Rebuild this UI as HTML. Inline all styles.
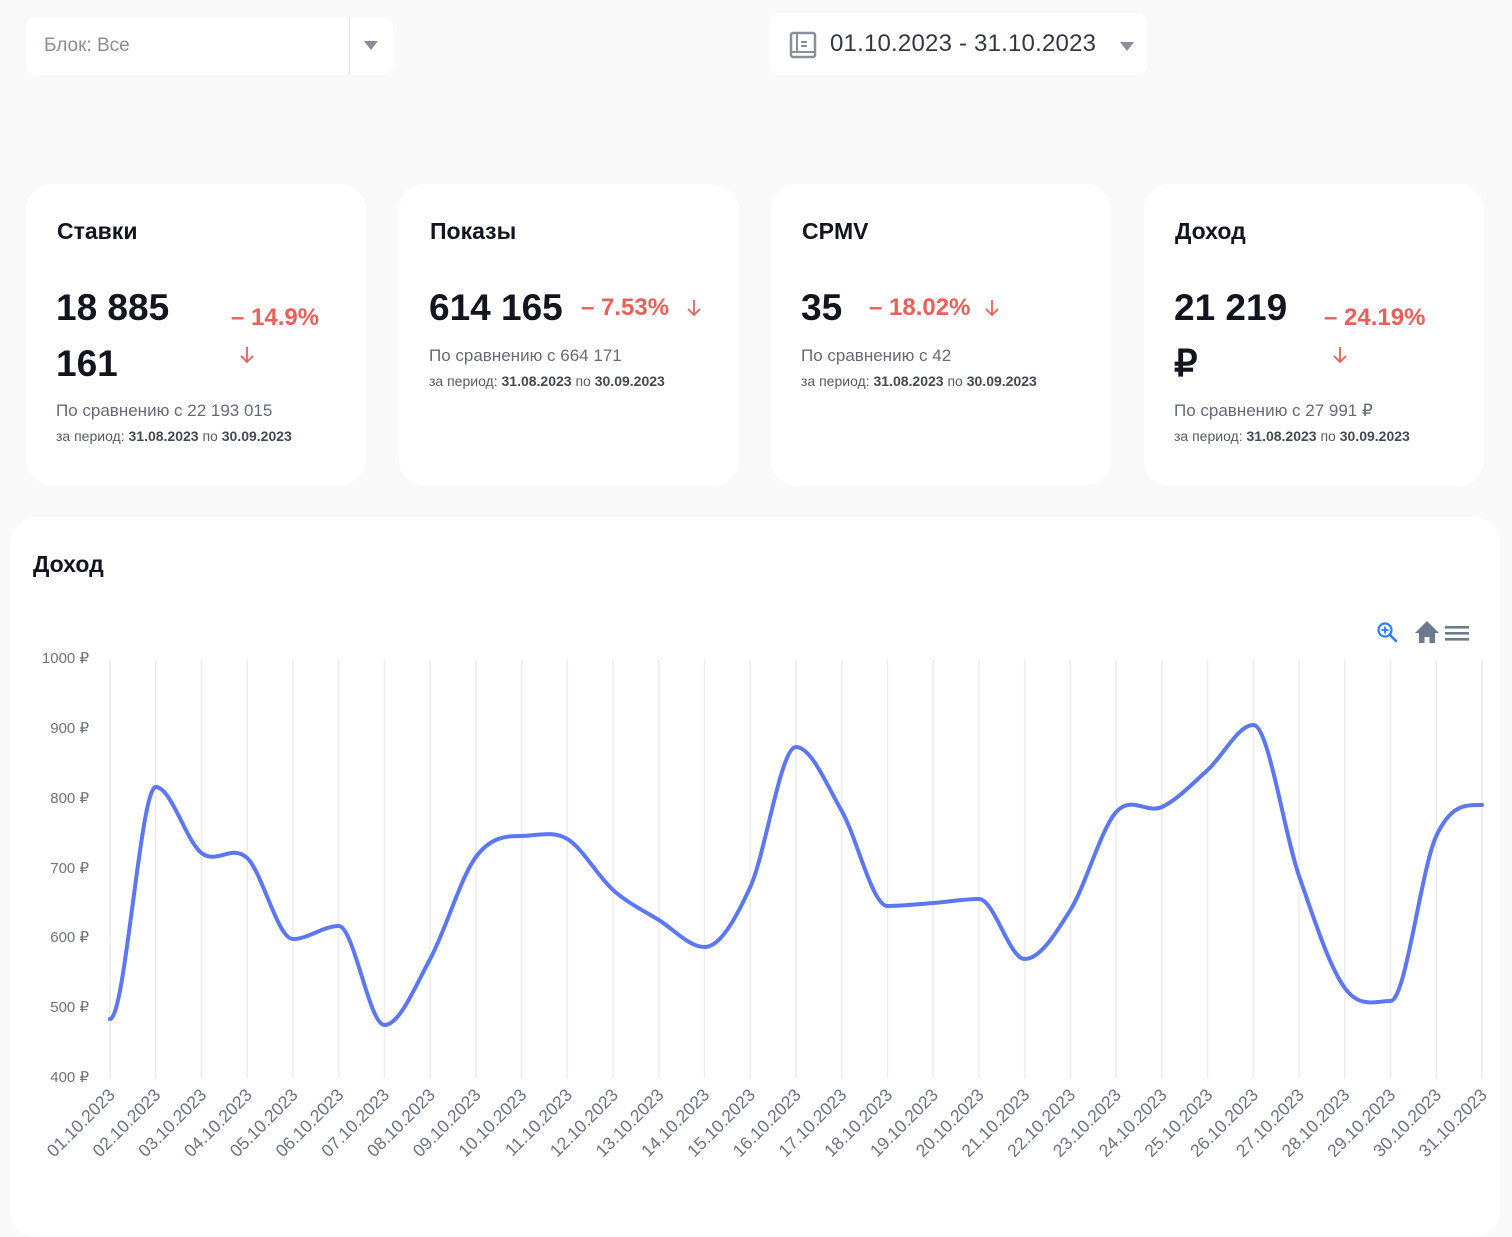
<!DOCTYPE html>
<html><head><meta charset="utf-8">
<style>
*{margin:0;padding:0;box-sizing:border-box}
body{width:1512px;height:1217px;background:#f9f9f9;font-family:"Liberation Sans",sans-serif;position:relative;overflow:hidden;color:#111}
.abs{position:absolute}
.box{background:#fff;border-radius:10px}
.card{position:absolute;top:184px;width:340px;height:302px;background:#fff;border-radius:26px}
.card h3{position:absolute;left:31px;top:34px;font-size:23px;font-weight:bold;color:#14141e}
.num{position:absolute;font-size:37px;font-weight:bold;color:#14141e;line-height:56px}
.pct{position:absolute;font-size:24px;font-weight:bold;color:#e8605a}
.arr{position:absolute;width:18px;height:20px}
.cmp{position:absolute;font-size:17px;color:#666a73}
.per{position:absolute;font-size:14px;color:#555a63}
.per b{color:#444a53}
</style></head><body>
<div class="abs box" style="left:26px;top:17px;width:367px;height:58px"></div>
<div class="abs" style="left:349px;top:17px;width:1px;height:58px;background:#e6e6e6"></div>
<div class="abs" style="left:44px;top:35px;font-size:19px;color:#8a8e96">Блок: Все</div>
<div class="abs" style="left:364px;top:41px;width:0;height:0;border-left:7px solid transparent;border-right:7px solid transparent;border-top:9px solid #8a8e96"></div>

<div class="abs box" style="left:769px;top:13px;width:378px;height:62px"></div>
<svg class="abs" style="left:789px;top:31px" width="28" height="28" viewBox="0 0 28 28"><rect x="2" y="2" width="24" height="24" rx="2" fill="none" stroke="#8a8e96" stroke-width="2.5"/><line x1="8" y1="3" x2="8" y2="21" stroke="#8a8e96" stroke-width="2"/><line x1="3" y1="21" x2="25" y2="21" stroke="#8a8e96" stroke-width="2"/><line x1="12" y1="11" x2="18" y2="11" stroke="#8a8e96" stroke-width="2"/><line x1="12" y1="15" x2="18" y2="15" stroke="#8a8e96" stroke-width="2"/></svg>
<div class="abs" style="left:830px;top:30px;font-size:24px;color:#333844;letter-spacing:0.2px">01.10.2023 - 31.10.2023</div>
<div class="abs" style="left:1120px;top:42px;width:0;height:0;border-left:7px solid transparent;border-right:7px solid transparent;border-top:9px solid #8a8e96"></div>

<div class="card" style="left:26px"><h3>Ставки</h3>
<div class="num" style="left:30px;top:96px">18 885<br>161</div>
<div class="pct" style="left:205px;top:120px">– 14.9%</div>
<svg class="arr" style="left:212px;top:161px" viewBox="0 0 18 20"><path d="M9 2V17M3 11L9 17L15 11" fill="none" stroke="#e8605a" stroke-width="1.8"/></svg>
<div class="cmp" style="left:30px;top:217px">По сравнению с 22 193 015</div>
<div class="per" style="left:30px;top:244px">за период: <b>31.08.2023</b> по <b>30.09.2023</b></div></div>

<div class="card" style="left:399px"><h3>Показы</h3>
<div class="num" style="left:30px;top:96px">614 165</div>
<div class="pct" style="left:182px;top:110px">– 7.53%</div>
<svg class="arr" style="left:286px;top:114px" viewBox="0 0 18 20"><path d="M9 2V17M3 11L9 17L15 11" fill="none" stroke="#e8605a" stroke-width="1.8"/></svg>
<div class="cmp" style="left:30px;top:162px">По сравнению с 664 171</div>
<div class="per" style="left:30px;top:189px">за период: <b>31.08.2023</b> по <b>30.09.2023</b></div></div>

<div class="card" style="left:771px"><h3>CPMV</h3>
<div class="num" style="left:30px;top:96px">35</div>
<div class="pct" style="left:98px;top:110px">– 18.02%</div>
<svg class="arr" style="left:212px;top:114px" viewBox="0 0 18 20"><path d="M9 2V17M3 11L9 17L15 11" fill="none" stroke="#e8605a" stroke-width="1.8"/></svg>
<div class="cmp" style="left:30px;top:162px">По сравнению с 42</div>
<div class="per" style="left:30px;top:189px">за период: <b>31.08.2023</b> по <b>30.09.2023</b></div></div>

<div class="card" style="left:1144px"><h3>Доход</h3>
<div class="num" style="left:30px;top:96px">21 219<br>₽</div>
<div class="pct" style="left:180px;top:120px">– 24.19%</div>
<svg class="arr" style="left:187px;top:161px" viewBox="0 0 18 20"><path d="M9 2V17M3 11L9 17L15 11" fill="none" stroke="#e8605a" stroke-width="1.8"/></svg>
<div class="cmp" style="left:30px;top:217px">По сравнению с 27 991 ₽</div>
<div class="per" style="left:30px;top:244px">за период: <b>31.08.2023</b> по <b>30.09.2023</b></div></div>

<div class="abs" style="left:10px;top:517px;width:1490px;height:720px;background:#fff;border-radius:26px"></div>
<div class="abs" style="left:33px;top:551px;font-size:23px;font-weight:bold;color:#14141e">Доход</div>

<svg class="abs" style="left:0;top:0" width="1512" height="1217">
<g id="grid" stroke="#ececec" stroke-width="1.5"></g>
<g font-family="Liberation Sans, sans-serif" font-size="15" fill="#6c7280" text-anchor="end">
<text x="89" y="663">1000 ₽</text><text x="89" y="733">900 ₽</text><text x="89" y="803">800 ₽</text><text x="89" y="873">700 ₽</text><text x="89" y="942">600 ₽</text><text x="89" y="1012">500 ₽</text><text x="89" y="1082">400 ₽</text>
</g>
<g id="xl" font-family="Liberation Sans, sans-serif" font-size="17.5" fill="#6c7280" text-anchor="end">
<text transform="translate(116,1096) rotate(-45)">01.10.2023</text>
<text transform="translate(161.7,1096) rotate(-45)">02.10.2023</text>
<text transform="translate(207.5,1096) rotate(-45)">03.10.2023</text>
<text transform="translate(253.2,1096) rotate(-45)">04.10.2023</text>
<text transform="translate(298.9,1096) rotate(-45)">05.10.2023</text>
<text transform="translate(344.7,1096) rotate(-45)">06.10.2023</text>
<text transform="translate(390.4,1096) rotate(-45)">07.10.2023</text>
<text transform="translate(436.1,1096) rotate(-45)">08.10.2023</text>
<text transform="translate(481.9,1096) rotate(-45)">09.10.2023</text>
<text transform="translate(527.6,1096) rotate(-45)">10.10.2023</text>
<text transform="translate(573.3,1096) rotate(-45)">11.10.2023</text>
<text transform="translate(619.1,1096) rotate(-45)">12.10.2023</text>
<text transform="translate(664.8,1096) rotate(-45)">13.10.2023</text>
<text transform="translate(710.5,1096) rotate(-45)">14.10.2023</text>
<text transform="translate(756.3,1096) rotate(-45)">15.10.2023</text>
<text transform="translate(802,1096) rotate(-45)">16.10.2023</text>
<text transform="translate(847.7,1096) rotate(-45)">17.10.2023</text>
<text transform="translate(893.5,1096) rotate(-45)">18.10.2023</text>
<text transform="translate(939.2,1096) rotate(-45)">19.10.2023</text>
<text transform="translate(984.9,1096) rotate(-45)">20.10.2023</text>
<text transform="translate(1030.7,1096) rotate(-45)">21.10.2023</text>
<text transform="translate(1076.4,1096) rotate(-45)">22.10.2023</text>
<text transform="translate(1122.1,1096) rotate(-45)">23.10.2023</text>
<text transform="translate(1167.9,1096) rotate(-45)">24.10.2023</text>
<text transform="translate(1213.6,1096) rotate(-45)">25.10.2023</text>
<text transform="translate(1259.3,1096) rotate(-45)">26.10.2023</text>
<text transform="translate(1305.1,1096) rotate(-45)">27.10.2023</text>
<text transform="translate(1350.8,1096) rotate(-45)">28.10.2023</text>
<text transform="translate(1396.5,1096) rotate(-45)">29.10.2023</text>
<text transform="translate(1442.3,1096) rotate(-45)">30.10.2023</text>
<text transform="translate(1488,1096) rotate(-45)">31.10.2023</text>
</g>
<path id="ln" fill="none" stroke="#5b78f2" stroke-width="4" stroke-linejoin="round" stroke-linecap="round"/>
<g transform="translate(1376,622)"><circle cx="9" cy="8" r="6.5" fill="none" stroke="#2f7ef0" stroke-width="2.2"/><line x1="14" y1="13" x2="20" y2="19" stroke="#2f7ef0" stroke-width="2.6" stroke-linecap="round"/><line x1="9" y1="4.5" x2="9" y2="11.5" stroke="#2f7ef0" stroke-width="1.8"/><line x1="5.5" y1="8" x2="12.5" y2="8" stroke="#2f7ef0" stroke-width="1.8"/></g>
<path d="M1427 621 L1415 633 H1419 V643 H1424.5 V637 H1429.5 V643 H1435 V633 H1439 Z" fill="#6b7a8f"/>
<g fill="#6b7a8f"><rect x="1445" y="626" width="24" height="2.6"/><rect x="1445" y="632" width="24" height="2.6"/><rect x="1445" y="638" width="24" height="2.6"/></g>
</svg>
<script>
var ys=[1019,787,853,858,939,926,1025,959,857,836,839,890,920,947,887,747,811,906,903,899,959,910,812,807,770,725,876,988,1001,836,805];
var dx=(1482-110)/30,g=document.getElementById('grid'),s='';
for(var i=0;i<31;i++){var x=110+i*dx;s+='<line x1="'+x+'" y1="660" x2="'+x+'" y2="1078"/>';}
g.innerHTML=s;
var d='M110 '+ys[0];
for(var i=1;i<31;i++){var x0=110+(i-1)*dx,x1=110+i*dx;
var p=ys[Math.max(i-2,0)],a=ys[i-1],b=ys[i],n=ys[Math.min(i+1,30)];
var t1=(b-p)/6,t2=(n-a)/6;
if((a-p)*(b-a)<=0)t1=0;if((b-a)*(n-b)<=0)t2=0;
d+=' C'+(x0+dx/3)+' '+(a+t1)+' '+(x1-dx/3)+' '+(b-t2)+' '+x1+' '+b;}
document.getElementById('ln').setAttribute('d',d);
</script>
</body></html>
